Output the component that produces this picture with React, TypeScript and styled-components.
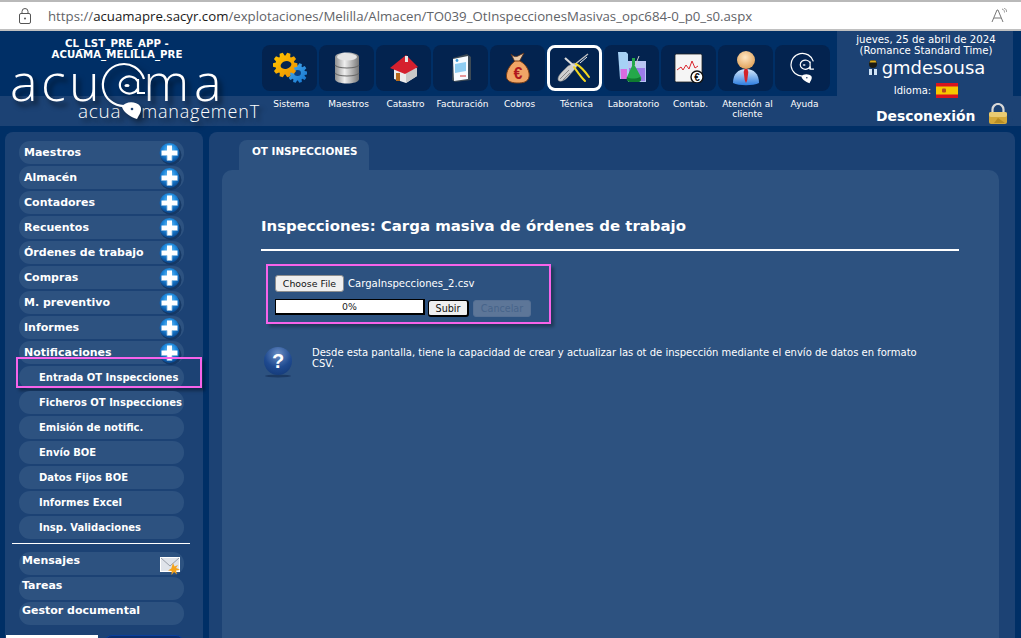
import React from "react";
import styled, { createGlobalStyle } from "styled-components";

const Global = createGlobalStyle`
  html, body { margin: 0; padding: 0; height: 100%; background: #002f66; overflow: hidden; }
  #root { height: 638px; overflow: hidden; }
  * { box-sizing: border-box; }
  body { font-family: "DejaVu Sans", Verdana, sans-serif; color: #fff; }
`;

const Page = styled.div`
  width: 1021px;
  height: 638px;
  display: flex;
  flex-direction: column;
  background: #002f66;
  overflow: hidden;
`;

const BrowserBar = styled.div`
  height: 31px;
  flex: none;
  background: #fff;
  border-top: 2px solid #b9b9b9;
  border-bottom: 2px solid #c0c0c0;
  display: flex;
  align-items: center;
  padding: 0 14px 0 19px;
  color: #5f6368;
  font-family: "Open Sans", sans-serif;
  font-size: 13.24px;
`;
const Url = styled.div`
  margin-left: 17px;
  flex: 1;
  white-space: nowrap;
  b { font-weight: 400; color: #1a1a1a; }
`;

const Header = styled.header`
  height: 101px;
  flex: none;
  display: flex;
  background: linear-gradient(#002f66 0 65px, #1c4274 65px 95px, #002f66 95px);
`;
const Brand = styled.div`
  width: 262px;
  flex: none;
  padding: 8px 0 0 10px;
  display: flex;
  flex-direction: column;
`;
const Env = styled.div`
  width: 210px;
  margin-left: 2px;
  text-align: center;
  font-size: 10.2px;
  font-weight: 700;
  line-height: 10.5px;
  letter-spacing: 0.06px;
  white-space: nowrap;
`;
const LogoMain = styled.div`
  display: flex;
  align-items: flex-start;
  height: 41px;
  font-family: "Open Sans", sans-serif;
  font-weight: 300;
  font-size: 52px;
  line-height: 42px;
  letter-spacing: 3.4px;
  text-shadow: 4px 5px 5px rgba(0,0,0,.55);
`;
const LogoTail = styled.span`
  letter-spacing: 5px;
  margin-left: -4px;
`;
const LogoSub = styled.div`
  display: flex;
  padding-left: 68px;
  font-family: "Open Sans", sans-serif;
  font-weight: 300;
  font-size: 19px;
  line-height: 20px;
  text-shadow: 4px 4px 4px rgba(0,0,0,.5);
`;
const SubWord = styled.span<{ $tight?: boolean }>`
  letter-spacing: ${p => (p.$tight ? "0.8px" : "0.7px")};
  font-size: ${p => (p.$tight ? "18px" : "19px")};
  margin-left: ${p => (p.$tight ? "20px" : "0")};
`;

const Nav = styled.nav`
  width: 568px;
  flex: none;
  display: flex;
  gap: 2px;
  padding-top: 14px;
`;
const NavItem = styled.div`
  width: 55px;
  display: flex;
  flex-direction: column;
  align-items: center;
`;
const Tile = styled.div<{ $active?: boolean }>`
  width: 55px;
  height: 46px;
  border-radius: 8px;
  background: #03234f;
  border: ${p => (p.$active ? "3px solid #fff" : "none")};
  display: flex;
  align-items: center;
  justify-content: center;
`;
const NavLabel = styled.div`
  width: 70px;
  margin-top: 8px;
  padding-left: 4px;
  text-align: center;
  font-size: 9px;
  line-height: 10px;
  flex: none;
`;

const UserPanel = styled.div`
  width: 176px;
  height: 95px;
  margin-left: 7px;
  background: #1c4274;
  border-bottom-right-radius: 8px;
  display: flex;
  flex-direction: column;
  align-items: center;
  padding: 3px 0 0 2px;
`;
const DateLine = styled.div`
  font-size: 10.2px;
  line-height: 11px;
  text-align: center;
  white-space: nowrap;
`;
const UserRow = styled.div`
  display: flex;
  align-items: center;
  gap: 3px;
  margin-top: 1px;
  font-size: 18px;
  line-height: 22px;
`;
const LangRow = styled.div`
  display: flex;
  align-items: center;
  gap: 5px;
  margin-top: 4px;
  font-size: 10px;
  height: 16px;
  svg { flex: none; }
`;
const LogoutRow = styled.div`
  display: flex;
  align-items: center;
  gap: 13px;
  margin-top: 3px;
  align-self: flex-start;
  margin-left: 37px;
  font-size: 13.9px;
  font-weight: 700;
  white-space: nowrap;
  line-height: 22px;
`;
const LogoutLabel = styled.span`
  margin-top: 4px;
`;

const Body = styled.div`
  flex: 1;
  display: flex;
  min-height: 0;
  padding: 0 6px 0 5px;
  gap: 6px;
`;
const Sidebar = styled.aside`
  width: 198px;
  flex: none;
  background: #1c4274;
  border-radius: 8px 8px 0 0;
  padding: 9px 19px 0 14px;
  display: flex;
  flex-direction: column;
  gap: 2px;
`;
const MenuRow = styled.div<{ $sub?: boolean; $top?: boolean }>`
  position: relative;
  height: 23px;
  flex: none;
  border-radius: 11px;
  background: #2d5280;
  display: flex;
  align-items: ${p => (p.$top ? "flex-start" : "center")};
  justify-content: space-between;
  padding: ${p => (p.$sub ? "0 0 1px 20px" : p.$top ? "2px 3px 0 3px" : "0 2px 0 5px")};
  font-size: ${p => (p.$sub ? "10px" : "11px")};
  font-weight: 700;
  white-space: nowrap;
`;
const Highlight = styled.div`
  position: absolute;
  left: -3px;
  top: -9px;
  width: 186px;
  height: 31px;
  border: 2px solid #f763ea;
  box-shadow: 3px 3px 3px rgba(0,0,0,.35);
  pointer-events: none;
`;
const Rule = styled.div`
  height: 1px;
  background: #fff;
  margin: 2px -6px 6px -7px;
  flex: none;
`;
const Stubs = styled.div`
  display: flex;
  gap: 6px;
  margin: 8px 0 0 -13px;
  flex: none;
`;
const StubWhite = styled.div`
  width: 98px;
  height: 10px;
  background: #fff;
`;
const StubBlue = styled.div`
  width: 85px;
  height: 10px;
  background: #0a2f6e;
  border: 1px solid #0b3f9c;
  border-radius: 8px 8px 0 0;
`;

const Main = styled.main`
  flex: 1;
  background: #1c4274;
  border-radius: 8px 8px 0 0;
  padding: 8px 16px 0 13px;
  display: flex;
  flex-direction: column;
`;
const Tab = styled.div`
  width: 130px;
  height: 30px;
  flex: none;
  margin-left: 17px;
  background: #2d5280;
  border-radius: 8px 8px 0 0;
  display: flex;
  padding: 4px 0 0 13px;
  font-size: 10.4px;
  line-height: 14px;
  font-weight: 700;
  white-space: nowrap;
`;
const Content = styled.section`
  flex: 1;
  background: #2d5280;
  border-radius: 10px 10px 0 0;
  padding: 46px 40px 0 39px;
`;
const Title = styled.h1`
  margin: 0;
  height: 33px;
  font-size: 14.95px;
  line-height: 20px;
  font-weight: 700;
  white-space: nowrap;
`;
const TitleRule = styled.div`
  height: 2px;
  background: #fff;
`;
const UploadBox = styled.div`
  width: 285px;
  height: 60px;
  margin: 13px 0 0 5px;
  border: 2px solid #f763ea;
  box-shadow: 3px 3px 3px rgba(0,0,0,.3);
  padding: 9px 0 0 7px;
  display: flex;
  flex-direction: column;
  gap: 7px;
`;
const FileRow = styled.div`
  display: flex;
  align-items: center;
  gap: 4px;
  font-size: 10.1px;
  height: 17px;
`;
const FileButton = styled.button`
  width: 69px;
  height: 17px;
  padding: 0;
  background: #efefef;
  border: 1px solid #8f8f8f;
  border-radius: 3px;
  color: #111;
  font-family: inherit;
  font-size: 9.4px;
`;
const UploadRow = styled.div`
  display: flex;
  align-items: flex-start;
  gap: 3px;
`;
const Progress = styled.div`
  width: 150px;
  height: 16px;
  background: #fff;
  border: 1px solid #000;
  border-right-width: 2px;
  border-bottom-width: 2px;
  color: #222;
  font-size: 9.4px;
  line-height: 13px;
  text-align: center;
`;
const ActionButton = styled.button<{ $off?: boolean }>`
  height: 17px;
  width: ${p => (p.$off ? "58px" : "41px")};
  margin-left: ${p => (p.$off ? "1px" : "0")};
  margin-top: 1px;
  padding: 0;
  border-radius: 3px;
  font-family: inherit;
  font-size: 9.6px;
  background: ${p => (p.$off ? "#5d7698" : "#efefef")};
  color: ${p => (p.$off ? "#47648a" : "#111")};
  border: 1px solid ${p => (p.$off ? "#567094" : "#000")};
  border-bottom-width: ${p => (p.$off ? "1px" : "2px")};
  border-right-width: ${p => (p.$off ? "1px" : "2px")};
`;
const HelpRow = styled.div`
  display: flex;
  margin: 22px 0 0 2px;
  gap: 19px;
`;
const HelpText = styled.p`
  margin: 1px 0 0;
  width: 615px;
  font-size: 10px;
  line-height: 11px;
`;

const Plus = () => (
  <svg width="24" height="24" viewBox="0 0 24 24" style={{ flex: "none" }}>
    <defs>
      <radialGradient id="pl" cx="50%" cy="35%" r="60%">
        <stop offset="0" stopColor="#7cc6f5" />
        <stop offset=".55" stopColor="#1b87dc" />
        <stop offset="1" stopColor="#0a4f9a" />
      </radialGradient>
    </defs>
    <ellipse cx="13" cy="14" rx="10.500" ry="10" fill="#0c2d5a" opacity=".7" />
    <circle cx="11.500" cy="12" r="10" fill="url(#pl)" />
    <path d="M9 4.500h5v5h5.500v5H14v5H9v-5H3.500v-5H9z" fill="#fff" />
    <path d="M3.500 14.500H9v5h5v-5h5.500" fill="none" stroke="#8bb8dd" strokeWidth=".8" />
  </svg>
);

function gearPath(cx: number, cy: number, ro: number, ri: number, teeth: number): string {
  const pts: string[] = [];
  for (let i = 0; i < teeth; i++) {
    const a = (i / teeth) * Math.PI * 2;
    const s = (Math.PI * 2) / teeth;
    const list: [number, number][] = [
      [ri, a - s * 0.42],
      [ro, a - s * 0.22],
      [ro, a + s * 0.22],
      [ri, a + s * 0.42],
    ];
    list.forEach(([r, t]) => pts.push(`${(cx + r * Math.cos(t)).toFixed(2)} ${(cy + r * Math.sin(t)).toFixed(2)}`));
  }
  return "M" + pts.join("L") + "Z";
}

const IconSistema = () => (
  <svg width="34" height="32" viewBox="0 0 34 32">
    <defs>
      <linearGradient id="go" x1="0" x2="1" y1="0" y2="1">
        <stop offset="0" stopColor="#ffc800" />
        <stop offset="1" stopColor="#ee8f00" />
      </linearGradient>
      <linearGradient id="gb" x1="0" x2="1" y1="0" y2="1">
        <stop offset="0" stopColor="#4fb2f2" />
        <stop offset="1" stopColor="#1070cc" />
      </linearGradient>
    </defs>
    <path d={gearPath(24.500, 21, 10, 7.500, 10)} fill="url(#gb)" />
    <ellipse cx="24.500" cy="21" rx="3.500" ry="3" fill="#0a3f80" />
    <path d={gearPath(12, 13, 12.500, 9.500, 10)} fill="url(#go)" />
    <ellipse cx="13" cy="13" rx="5.500" ry="3.800" transform="rotate(-15 13 13)" fill="#03234f" />
  </svg>
);
const IconMaestros = () => (
  <svg width="26" height="32" viewBox="0 0 26 32">
    <defs>
      <linearGradient id="db" x1="0" x2="1" y1="0" y2="0">
        <stop offset="0" stopColor="#8f8f8f" />
        <stop offset=".4" stopColor="#efefef" />
        <stop offset="1" stopColor="#777" />
      </linearGradient>
    </defs>
    <path d="M1 5c0-6 24-6 24 0v22c0 6-24 6-24 0z" fill="url(#db)" />
    <path d="M1 13c3 4 21 4 24 0M1 21c3 4 21 4 24 0" fill="none" stroke="#6a6a6a" strokeWidth="1.200" />
    <ellipse cx="13" cy="5" rx="10" ry="3.400" fill="#e4e4e4" />
  </svg>
);
const IconCatastro = () => (
  <svg width="34" height="32" viewBox="0 0 34 32">
    <path d="M7 14 21 8l9 9v7l-11 7-12-4z" fill="#ededed" />
    <path d="M19 20l11-4v8l-11 7z" fill="#c9c9c9" />
    <path d="M3 16 19 3l12 12-13 7z" fill="#d5202e" />
    <rect x="9" y="21" width="4" height="8" fill="#b56a1c" />
    <rect x="18" y="4" width="3" height="6" fill="#e8e8e8" />
  </svg>
);
const IconFactura = () => (
  <svg width="22" height="30" viewBox="0 0 22 30">
    <path d="M3 5 17 1l4 3v23L5 29l-3-2z" fill="#3d4a55" />
    <path d="M3 6 18 3v23L4 28z" fill="#f7fbff" />
    <path d="M5 11l11-2v9L5 20z" fill="#8ecdf2" />
    <circle cx="7" cy="7.500" r="1.400" fill="#3c9bd8" />
    <path d="M10 23h6" stroke="#d55" strokeWidth="1.200" />
  </svg>
);
const IconCobros = () => (
  <svg width="26" height="32" viewBox="0 0 26 32">
    <path d="M6 2c3 3 5 3 7 2l6-3-5 9H10z" fill="#e9c9a8" stroke="#5c2f14" strokeWidth=".8" />
    <path d="M10 9h5c7 4 10 11 9 16-1 5-6 6-11 6S2 30 1.500 25C1 19 5 13 10 9z" fill="#f0a566" stroke="#7a3d14" strokeWidth="1" />
    <text x="13" y="27" textAnchor="middle" fontFamily="Liberation Sans" fontWeight="700" fontSize="16" fill="#b0171f">€</text>
  </svg>
);
const IconTecnica = () => (
  <svg width="36" height="32" viewBox="0 0 36 32" style={{ flex: "none" }}>
    <path d="M1 27c0-4 6-9 10-13l6-3 4 2-4 5-7 8c-3 3-9 5-9 1z" fill="#cfcfcf" stroke="#8a8a8a" strokeWidth=".6" />
    <path d="M3 27 12 18M6 28 13 21" stroke="#777" strokeWidth=".8" />
    <path d="M8 6l10 9" stroke="#dadada" strokeWidth="2.200" />
    <path d="M17 13 31 2" stroke="#c4c4c4" strokeWidth="1.300" />
    <path d="M23 11l7-6" stroke="#eee" strokeWidth="1" />
    <path d="M19 12c4 2 8 6 13 13M17 15c3 4 6 9 11 14" fill="none" stroke="#f2d71e" strokeWidth="2" strokeLinecap="round" />
  </svg>
);
const IconLab = () => (
  <svg width="30" height="34" viewBox="0 0 30 34">
    <path d="M1 1h8l2 2v25H3z" fill="#a6d1f5" />
    <path d="M3.500 18H10v10H4z" fill="#d96be0" />
    <rect x="11" y="10" width="18" height="21" fill="#b9c5f2" />
    <rect x="12" y="17" width="16" height="13" fill="#9c7ce8" />
    <path d="M15 7l3 0v8l6 11c1 3-1 5-4 5h-6c-3 0-5-2-4-5l5-11z" fill="#24a84a" />
    <path d="M10 26c3 2 9 2 13 0l1 3c-1 2-2 2-4 2h-6c-3 0-5-2-4-5z" fill="#0f7a30" />
    <path d="M22 5 18 15" stroke="#ccc" />
  </svg>
);
const IconContab = () => (
  <svg width="30" height="30" viewBox="0 0 30 30">
    <rect x="1" y="1" width="27" height="28" rx="1.500" fill="#f5f5f5" stroke="#222" strokeWidth=".8" />
    <path d="M3 17l4-3 2 3 3-5 3 4 3-8 3 7 3-2" fill="none" stroke="#d9262e" strokeWidth="1" />
    <circle cx="23" cy="24" r="6" fill="#fff" stroke="#111" strokeWidth="1.400" />
    <text x="23" y="27.500" textAnchor="middle" fontFamily="Liberation Sans" fontWeight="700" fontSize="10" fill="#111">€</text>
  </svg>
);
const IconPerson = () => (
  <svg width="28" height="36" viewBox="0 0 28 36">
    <defs>
      <radialGradient id="hd" cx="45%" cy="35%" r="65%">
        <stop offset="0" stopColor="#ffe7c4" />
        <stop offset="1" stopColor="#e0a25a" />
      </radialGradient>
      <linearGradient id="bd" x1="0" x2="0" y1="0" y2="1">
        <stop offset="0" stopColor="#d5e9fb" />
        <stop offset="1" stopColor="#2d7de0" />
      </linearGradient>
    </defs>
    <path d="M1 33c0-9 5-14 13-14s13 5 13 14c-6 3-20 3-26 0z" fill="url(#bd)" />
    <path d="M12.500 19h3l.8 3-1 8-1.300 3-1.300-3-1-8z" fill="#d3242a" />
    <circle cx="14" cy="10" r="9" fill="url(#hd)" />
  </svg>
);
const AtMark = ({ dot }: { dot: string }) => (
  <>
    <path d="M43 17A21 21 0 1 0 24 44" fill="none" stroke="#fff" strokeWidth="2.200" />
    <path d="M37 19.500a9.500 8.500 0 1 0 0 7V31h7" fill="none" stroke="#fff" strokeWidth="2.200" />
    <path d="M37 17v14" stroke="#fff" strokeWidth="2.200" />
    <ellipse cx="26" cy="23.500" rx="2.600" ry="1.500" fill="#fff" />
    <path d="M21 45c3-6 14-6 18-1 3 4-1 9-3 13-6-2-13-6-15-12z" fill="#fff" />
    <circle cx="31" cy="47" r="1.300" fill={dot} />
  </>
);
const IconAyuda = () => (
  <svg width="25" height="33" viewBox="0 0 46 60">
    <AtMark dot="#03234f" />
  </svg>
);

const SmallUser = () => (
  <svg width="12" height="16" viewBox="0 0 12 16" style={{ flex: "none" }}>
    <circle cx="6" cy="4" r="4" fill="#1a1a12" />
    <path d="M2.500 2.500h7l-1-2h-5z" fill="#d8a91c" />
    <path d="M2 9h8v6H2z" fill="#cfe3f6" />
    <path d="M5 9h2v6H5z" fill="#14345f" />
  </svg>
);
const Flag = () => (
  <svg width="22" height="15" viewBox="0 0 22 15">
    <rect width="22" height="15" fill="#d9141e" />
    <rect y="3.500" width="22" height="8" fill="#f6c800" />
    <rect x="6" y="5.500" width="4" height="4" rx="1" fill="#b5491f" />
  </svg>
);
const BigLock = () => (
  <svg width="20" height="22" viewBox="0 0 20 22" style={{ flex: "none" }}>
    <path d="M4.500 10V6.500a5.500 5.500 0 0 1 11 0V10" fill="none" stroke="#d8d8d8" strokeWidth="2.200" />
    <rect x="1" y="9" width="18" height="12" rx="2" fill="#d4a93a" />
    <rect x="1" y="9" width="18" height="5" rx="2" fill="#e9cb72" />
    <path d="M10 15l7 5H6z" fill="#b88d24" />
  </svg>
);
const Envelope = () => (
  <svg width="21" height="19" viewBox="0 0 21 19" style={{ flex: "none", marginTop: 3 }}>
    <rect x="0.500" y="0.500" width="19" height="14" fill="#dfe3ea" stroke="#fff" />
    <path d="M1 1l9 8 9-8" fill="none" stroke="#9aa0aa" />
    <path d="M13 6l1.500 3.500L18 8l-2 3 4 1.500-4 1 1 4-3-2.500-2.500 3 .2-4-3.700-.5 3.300-2z" fill="#f5a31c" />
  </svg>
);
const HelpIcon = () => (
  <svg width="30" height="32" viewBox="0 0 30 32" style={{ flex: "none" }}>
    <defs>
      <radialGradient id="hq" cx="50%" cy="25%" r="80%">
        <stop offset="0" stopColor="#6b8fc5" />
        <stop offset=".6" stopColor="#1f4a90" />
        <stop offset="1" stopColor="#143a78" />
      </radialGradient>
    </defs>
    <ellipse cx="15" cy="30" rx="13" ry="1.500" fill="#1c3a63" />
    <circle cx="15" cy="15" r="14" fill="url(#hq)" />
    <text x="15" y="22" textAnchor="middle" fontFamily="Liberation Sans" fontWeight="700" fontSize="20" fill="#fff">?</text>
  </svg>
);
const UrlLock = () => (
  <svg width="12" height="16" viewBox="0 0 12 16" style={{ flex: "none" }}>
    <rect x="0.500" y="5.500" width="11" height="10" rx="1.500" fill="none" stroke="#555" />
    <path d="M3 5.500V3.500a3 3 0 0 1 6 0v2" fill="none" stroke="#555" />
    <circle cx="6" cy="10.500" r="1" fill="#555" />
  </svg>
);
const ReadAloud = () => (
  <svg width="16" height="15" viewBox="0 0 16 15" style={{ flex: "none" }}>
    <path d="M1 14 6 2h1l5 12M3 10h7" fill="none" stroke="#777" strokeWidth="1" />
    <path d="M11 1c2 .5 2.500 2 2.500 3.500M13 0c2 .8 2.700 2.500 2.700 4" fill="none" stroke="#888" strokeWidth=".9" />
  </svg>
);
const LogoAt = () => (
  <svg width="46" height="60" viewBox="0 0 46 60" style={{ flex: "none", overflow: "visible", margin: "2px 0 0 -2px", filter: "drop-shadow(4px 4px 3px rgba(0,0,0,.5))" }}>
    <AtMark dot="#1c4274" />
  </svg>
);

const navItems: [string, React.ReactNode, boolean?][] = [
  ["Sistema", <IconSistema />],
  ["Maestros", <IconMaestros />],
  ["Catastro", <IconCatastro />],
  ["Facturación", <IconFactura />],
  ["Cobros", <IconCobros />],
  ["Técnica", <IconTecnica />, true],
  ["Laboratorio", <IconLab />],
  ["Contab.", <IconContab />],
  ["Atención al cliente", <IconPerson />],
  ["Ayuda", <IconAyuda />],
];
const mainMenu = ["Maestros", "Almacén", "Contadores", "Recuentos", "Órdenes de trabajo", "Compras", "M. preventivo", "Informes", "Notificaciones"];
const subMenu = ["Entrada OT Inspecciones", "Ficheros OT Inspecciones", "Emisión de notific.", "Envío BOE", "Datos Fijos BOE", "Informes Excel", "Insp. Validaciones"];

export default function App() {
  return (
    <Page>
      <Global />
      <BrowserBar>
        <UrlLock />
        <Url>
          https://<b>acuamapre.sacyr.com</b>/explotaciones/Melilla/Almacen/TO039_OtInspeccionesMasivas_opc684-0_p0_s0.aspx
        </Url>
        <ReadAloud />
      </BrowserBar>
      <Header>
        <Brand>
          <Env>CL_LST_PRE_APP -<br />ACUAMA_MELILLA_PRE</Env>
          <LogoMain>
            <span>acu</span>
            <LogoAt />
            <LogoTail>ma</LogoTail>
          </LogoMain>
          <LogoSub>
            <SubWord>acua</SubWord>
            <SubWord $tight>managemenT</SubWord>
          </LogoSub>
        </Brand>
        <Nav>
          {navItems.map(([label, icon, active]) => (
            <NavItem key={label}>
              <Tile $active={active}>{icon}</Tile>
              <NavLabel>{label}</NavLabel>
            </NavItem>
          ))}
        </Nav>
        <UserPanel>
          <DateLine>jueves, 25 de abril de 2024<br />(Romance Standard Time)</DateLine>
          <UserRow><SmallUser />gmdesousa</UserRow>
          <LangRow>Idioma: <Flag /></LangRow>
          <LogoutRow><LogoutLabel>Desconexión</LogoutLabel><BigLock /></LogoutRow>
        </UserPanel>
      </Header>
      <Body>
        <Sidebar>
          {mainMenu.map(m => (
            <MenuRow key={m}>{m}<Plus /></MenuRow>
          ))}
          {subMenu.map((m, i) => (
            <MenuRow key={m} $sub>
              {m}
              {i === 0 && <Highlight />}
            </MenuRow>
          ))}
          <Rule />
          <MenuRow $top>Mensajes<Envelope /></MenuRow>
          <MenuRow $top>Tareas</MenuRow>
          <MenuRow $top>Gestor documental</MenuRow>
          <Stubs><StubWhite /><StubBlue /></Stubs>
        </Sidebar>
        <Main>
          <Tab>OT INSPECCIONES</Tab>
          <Content>
            <Title>Inspecciones: Carga masiva de órdenes de trabajo</Title>
            <TitleRule />
            <UploadBox>
              <FileRow>
                <FileButton>Choose File</FileButton>
                CargaInspecciones_2.csv
              </FileRow>
              <UploadRow>
                <Progress>0%</Progress>
                <ActionButton>Subir</ActionButton>
                <ActionButton $off>Cancelar</ActionButton>
              </UploadRow>
            </UploadBox>
            <HelpRow>
              <HelpIcon />
              <HelpText>
                Desde esta pantalla, tiene la capacidad de crear y actualizar las ot de inspección mediante el envío de datos en formato CSV.
              </HelpText>
            </HelpRow>
          </Content>
        </Main>
      </Body>
    </Page>
  );
}
